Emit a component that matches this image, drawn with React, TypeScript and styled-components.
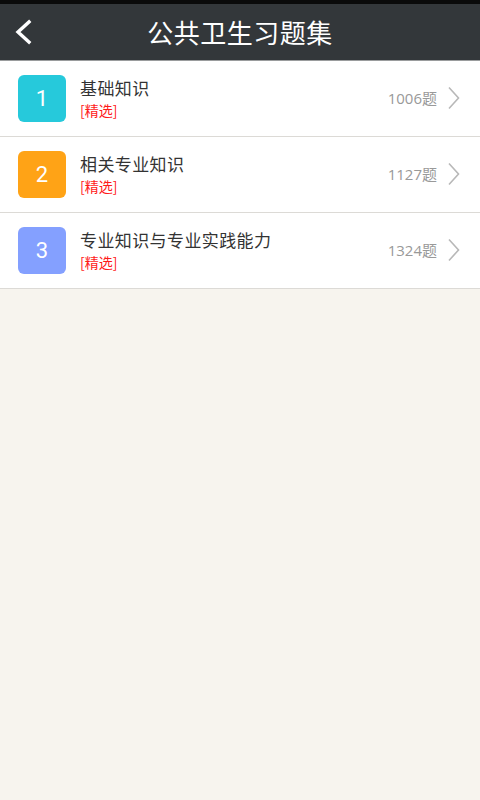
import React from "react";
import styled, { createGlobalStyle } from "styled-components";

const Global = createGlobalStyle`
  html, body { margin: 0; padding: 0; }
  body { background: #f7f4ee; font-family: "Noto Sans CJK SC", "Roboto", "DejaVu Sans", sans-serif; }
  #root { min-height: 800px; }
`;

const Page = styled.div`
  width: 480px;
  height: 800px;
  background: #f7f4ee;
  display: flex;
  flex-direction: column;
`;

const StatusStrip = styled.div`
  height: 4px;
  background: #0a0a0a;
`;

const Header = styled.header`
  height: 56px;
  background: #33373a;
  border-bottom: 1px solid #9a9c9d;
  display: flex;
  align-items: center;
  justify-content: center;
  position: relative;
`;

const BackButton = styled.div`
  position: absolute;
  left: 13px;
  top: 15px;
  width: 24px;
  height: 26px;
  display: flex;
`;

const Title = styled.h1`
  margin: 0;
  color: #ffffff;
  font-size: 26px;
  font-weight: 400;
  letter-spacing: 0.5px;
  line-height: 1;
  font-family: "Noto Sans CJK SC", sans-serif;
`;

const List = styled.div`
  display: flex;
  flex-direction: column;
  background: #ffffff;
`;

const Row = styled.div`
  height: 75px;
  display: flex;
  align-items: center;
  padding: 0 18px;
  border-bottom: 1px solid #dcdad6;
  box-sizing: content-box;
`;

const Badge = styled.div<{ $color: string }>`
  width: 48px;
  height: 47px;
  border-radius: 6px;
  background: ${(p) => p.$color};
  color: #fff;
  font-family: "Roboto", sans-serif;
  font-size: 22px;
  display: flex;
  align-items: center;
  justify-content: center;
  flex-shrink: 0;
`;

const TextCol = styled.div`
  flex: 1;
  display: flex;
  flex-direction: column;
  margin-left: 14px;
  margin-top: -2px;
`;

const ItemTitle = styled.div`
  color: #333333;
  font-size: 17px;
  letter-spacing: 0.4px;
  line-height: normal;
`;

const Tag = styled.div`
  color: #ff1a1a;
  font-size: 14px;
  line-height: normal;
`;

const Count = styled.div`
  color: #999999;
  font-size: 15px;
  font-family: "Open Sans", "Noto Sans CJK SC", sans-serif;
  margin-right: 10px;
  margin-top: -2px;
`;

const Chevron = styled.svg`
  width: 14px;
  height: 24px;
  margin-right: 1px;
  margin-top: -2px;
`;

const items = [
  { n: 1, title: "基础知识", count: "1006题", color: "#26c9db" },
  { n: 2, title: "相关专业知识", count: "1127题", color: "#ffa316" },
  { n: 3, title: "专业知识与专业实践能力", count: "1324题", color: "#84a0ff" },
];

export default function App() {
  return (
    <>
      <Global />
      <Page>
        <StatusStrip />
        <Header>
          <BackButton>
            <svg width="24" height="26" viewBox="0 0 24 26">
              <path d="M16 3 L5 13 L16 23" fill="none" stroke="#fff" strokeWidth="3.4" strokeLinecap="square" strokeLinejoin="miter" />
            </svg>
          </BackButton>
          <Title>公共卫生习题集</Title>
        </Header>
        <List>
          {items.map((it) => (
            <Row key={it.n}>
              <Badge $color={it.color}>{it.n}</Badge>
              <TextCol>
                <ItemTitle>{it.title}</ItemTitle>
                <Tag>[精选]</Tag>
              </TextCol>
              <Count>{it.count}</Count>
              <Chevron viewBox="0 0 14 24">
                <path d="M2 1.5 L11.5 12 L2 22.5" fill="none" stroke="#b8b8b8" strokeWidth="1.6" />
              </Chevron>
            </Row>
          ))}
        </List>
      </Page>
    </>
  );
}
